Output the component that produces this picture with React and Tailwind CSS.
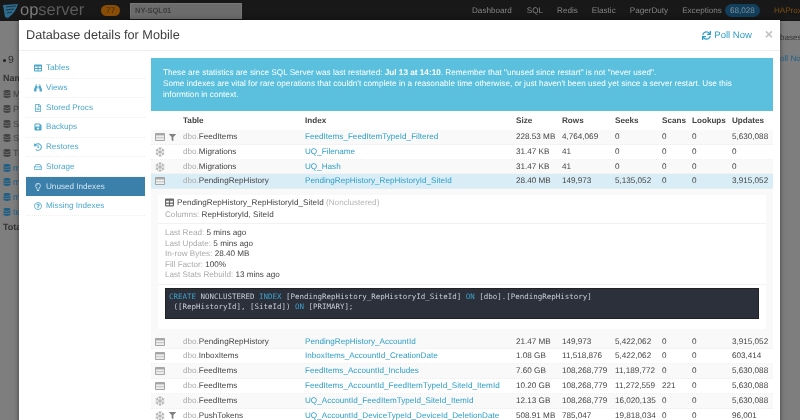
import React from "react";
import { FaTable, FaBinoculars, FaRegFileAlt, FaSave, FaHistory, FaRegHdd, FaRegLightbulb, FaRegQuestionCircle, FaSync, FaFilter, FaRegSnowflake, FaDatabase } from "react-icons/fa";

const side = [
  ["Tables", FaTable],
  ["Views", FaBinoculars],
  ["Stored Procs", FaRegFileAlt],
  ["Backups", FaSave],
  ["Restores", FaHistory],
  ["Storage", FaRegHdd],
  ["Unused Indexes", FaRegLightbulb, true],
  ["Missing Indexes", FaRegQuestionCircle],
];

const top = [
  ["table", true, "FeedItems", "FeedItems_FeedItemTypeId_Filtered", "228.53 MB", "4,764,069", "0", "0", "0", "5,630,088"],
  ["snow", false, "Migrations", "UQ_Filename", "31.47 KB", "41", "0", "0", "0", "0"],
  ["snow", false, "Migrations", "UQ_Hash", "31.47 KB", "41", "0", "0", "0", "0"],
  ["table", false, "PendingRepHistory", "PendingRepHistory_RepHistoryId_SiteId", "28.40 MB", "149,973", "5,135,052", "0", "0", "3,915,052"],
];
const bottom = [
  ["table", false, "PendingRepHistory", "PendingRepHistory_AccountId", "21.47 MB", "149,973", "5,422,062", "0", "0", "3,915,052"],
  ["table", false, "InboxItems", "InboxItems_AccountId_CreationDate", "1.08 GB", "11,518,876", "5,422,062", "0", "0", "603,414"],
  ["table", false, "FeedItems", "FeedItems_AccountId_Includes", "7.60 GB", "108,268,779", "11,189,772", "0", "0", "5,630,088"],
  ["table", false, "FeedItems", "FeedItems_AccountId_FeedItemTypeId_SiteId_ItemId", "10.20 GB", "108,268,779", "11,272,559", "221", "0", "5,630,088"],
  ["snow", false, "FeedItems", "UQ_AccountId_FeedItemTypeId_SiteId_ItemId", "12.13 GB", "108,268,779", "16,020,135", "0", "0", "5,630,088"],
  ["snow", true, "PushTokens", "UQ_AccountId_DeviceTypeId_DeviceId_DeletionDate", "508.91 MB", "785,047", "19,818,034", "0", "0", "96,001"],
];

const cols = "grid grid-cols-[32px_122px_211px_46px_53px_47px_30px_40px_41px]";

function TableIcon({ color = "#a6a6a6" }) {
  return (
    <svg width="10" height="8" viewBox="0 0 10 8" className="shrink-0">
      <rect x="0" y="0" width="10" height="8" rx="0.8" fill={color} />
      <rect x="1" y="2.4" width="8" height="4.6" fill="#eeeeee" />
      <path d="M1 4.7 H9" stroke={color} strokeWidth="0.6" />
    </svg>
  );
}

function Row({ r, striped, active }) {
  return (
    <div className={`${cols} h-[14.8px] items-center whitespace-nowrap border-b border-dotted border-[#eeeeee] ${active ? "bg-[#d9edf7]" : striped ? "bg-[#f9f9f9]" : "bg-white"}`}>
      <div className="flex items-center gap-[4px] pl-1 text-[10px] text-[#b4b4b4]">
        {r[0] === "table" ? <TableIcon /> : <FaRegSnowflake className="w-[10px] shrink-0" />}
        {r[1] && <FaFilter className="text-[7px] text-[#808080]" />}
      </div>
      <div className="overflow-hidden"><span className="text-[#aaaaaa]">dbo.</span>{r[2]}</div>
      <div className="text-[#2f9fc6]">{r[3]}</div>
      <div>{r[4]}</div>
      <div>{r[5]}</div>
      <div>{r[6]}</div>
      <div>{r[7]}</div>
      <div>{r[8]}</div>
      <div>{r[9]}</div>
    </div>
  );
}

function Stat({ k, v }) {
  return <div><span className="text-[#aaaaaa]">{k}:</span> {v}</div>;
}

const pageRows = [
  ["Ma", "#444444"], ["Pr", "#444444"], ["St", "#444444"], ["St", "#444444"], ["Tr", "#444444"],
  ["mi", "#1f5f85"], ["mi", "#1f5f85"], ["mi", "#1f5f85"], ["te", "#1f5f85"],
];

export default function App() {
  return (
    <div className="relative h-[420px] w-[800px] overflow-hidden bg-[#7e7e7e] blur-[0.3px] font-['Liberation_Sans',sans-serif] text-[8.15px] leading-[14px] text-[#444444] [text-rendering:geometricPrecision]">
      <header className="flex h-[21px] items-center bg-[#181818] pl-[3px] text-[#858585]">
        <svg width="16" height="16" viewBox="0 0 16 16" className="shrink-0">
          <path d="M0 2 L15 1 Q13 9 5 15 L2 14 Z" fill="#2d6d8f" />
          <path d="M3 4 L13 3 M3 7 L11 6 M4 10 L9 9" stroke="#181818" strokeWidth="0.7" />
        </svg>
        <span className="ml-[1px] w-[66px] text-[16.5px] leading-none text-[#7b7b7b]">op<span className="text-[#5c5c5c]">server</span></span>
        <span className="ml-[15px] flex h-[11px] w-[19px] items-center justify-center rounded-full bg-[#8a4d06] text-[#3a2a10]">77</span>
        <div className="ml-[10px] flex h-[16px] w-[112px] items-center border border-[#777777] bg-[#6c6c6c] pl-1 text-[7.5px] font-bold text-[#3c3c3c]">NY-SQL01</div>
        <nav className="absolute left-[472px] top-[3px] flex h-[15px] items-center whitespace-nowrap">
          <span>Dashboard</span>
          <span className="ml-[15px]">SQL</span>
          <span className="ml-[14px]">Redis</span>
          <span className="ml-[14px]">Elastic</span>
          <span className="ml-[14px]">PagerDuty</span>
          <span className="ml-[14px]">Exceptions</span>
          <span className="ml-[3px] flex h-[13px] w-[35px] items-center justify-center rounded-full bg-[#123f5c] text-[#7f8f99]">68,028</span>
          <span className="ml-[14px] w-[29px] overflow-hidden text-[#7b4d12]">HAProxy</span>
        </nav>
      </header>

      <main className="px-[3px] pt-[32px] text-[#333333]">
        <div className="flex items-center gap-[2px] text-[10.5px] leading-[14px]"><span className="h-[3px] w-[3px] rounded-full bg-[#222222]" />9</div>
        <div className="mt-[4px] text-[9px] font-bold leading-[14px]">Name</div>
        <div className="mt-[2px]">
          {pageRows.map(([t, c], i) => (
            <div key={i} className="flex h-[14.7px] items-center gap-[2px] text-[9px]" style={{ color: c }}><FaDatabase className="text-[8px]" />{t}</div>
          ))}
        </div>
        <div className="mt-[1px] text-[9px] font-bold">Total</div>
      </main>
      <div className="absolute right-0 top-[31px] w-[20px] overflow-hidden text-[#333333]">bases</div>
      <div className="absolute right-0 top-[52px] w-[20px] overflow-hidden whitespace-nowrap text-[#1f5f85]">oll Now</div>

      <section className="absolute left-[19px] top-[20px] h-[410px] w-[761px] bg-white shadow-[0_0_5px_rgba(0,0,0,0.5)]">
        <div className="flex h-[31px] items-center border-b border-[#eeeeee] pl-[7px] pr-[7px]">
          <h1 className="text-[12.7px] leading-none text-[#3d3d3d]">Database details for Mobile</h1>
          <div className="ml-auto mt-[1px] flex items-center gap-[3px] text-[9.5px] text-[#2f9fc6]"><FaSync className="text-[9px]" />Poll Now</div>
          <span className="ml-[13px] -mt-[3px] text-[14px] font-bold leading-none text-[#c2c2c2]">×</span>
        </div>
        <div className="flex pt-[7px] pl-[7px]">
          <nav className="w-[119px] shrink-0 pt-[1px] text-[#4aa8cb]">
            {side.map(([label, Icon, active]) => (
              <div key={label} className={`flex h-[19.65px] items-center gap-[4px] pl-2 border-b border-dotted border-[#eeeeee] ${active ? "bg-[#3a80ab] text-[#d5e4ee] border-none" : ""}`}>
                <Icon className="w-[8px] text-[8px] shrink-0" />
                <span>{label}</span>
              </div>
            ))}
          </nav>
          <div className="ml-[6px] w-[622px] shrink-0">
            <div className="h-[53px] bg-[#5bc0de] px-3 pt-[10px] text-[8.2px] leading-[10.8px] text-white">
              These are statistics are since SQL Server was last restarted: <b>Jul 13 at 14:10</b>. Remember that "unused since restart" is not "never used".<br />
              Some indexes are vital for rare operations that couldn't complete in a reasonable time otherwise, or just haven't been used yet since a server restart. Use this informtion in context.
            </div>
            <div className={`${cols} h-[19px] items-center font-bold`}>
              <div /><div>Table</div><div>Index</div><div>Size</div><div>Rows</div><div>Seeks</div><div>Scans</div><div>Lookups</div><div>Updates</div>
            </div>
            {top.map((r, i) => <Row key={i} r={r} striped={i % 2 === 0} active={i === 3} />)}
            <div className="bg-[#f9f9f9] px-[7px] pt-[6px] pb-[6px]">
              <div className="bg-white">
                <div className="border-b border-[#f2f2f2] px-[7px] pt-[2px] pb-[3px] leading-[11.5px]">
                  <div className="flex items-center gap-[3px] whitespace-pre"><FaTable className="text-[9px] text-[#666666]" /><span>PendingRepHistory_RepHistoryId_SiteId <span className="text-[#b5b5b5]">(Nonclustered)</span></span></div>
                  <div><span className="text-[#aaaaaa]">Columns:</span> RepHistoryId, SiteId</div>
                </div>
                <div className="border-b border-[#f2f2f2] px-[7px] pt-[4px] pb-[3px] leading-[10.5px]">
                  <Stat k="Last Read" v="5 mins ago" />
                  <Stat k="Last Update" v="5 mins ago" />
                  <Stat k="In-row Bytes" v="28.40 MB" />
                  <Stat k="Fill Factor" v="100%" />
                  <Stat k="Last Stats Rebuild" v="13 mins ago" />
                </div>
                <div className="px-[7px] pt-[3px] pb-[10px]">
                  <pre className="h-[31px] border border-[#222222] bg-[#2b303b] px-[3px] pt-[3px] font-['DejaVu_Sans_Mono',monospace] text-[7.47px] leading-[10.8px] text-[#c8ccd4]"><span className="text-[#3fa0c8]">CREATE</span> NONCLUSTERED <span className="text-[#3fa0c8]">INDEX</span> [PendingRepHistory_RepHistoryId_SiteId] <span className="text-[#3fa0c8]">ON</span> [dbo].[PendingRepHistory]{"\n"} ([RepHistoryId], [SiteId]) <span className="text-[#3fa0c8]">ON</span> [PRIMARY];</pre>
                </div>
              </div>
            </div>
            {bottom.map((r, i) => <Row key={i} r={r} striped={i % 2 === 0} />)}
          </div>
        </div>
      </section>
    </div>
  );
}
